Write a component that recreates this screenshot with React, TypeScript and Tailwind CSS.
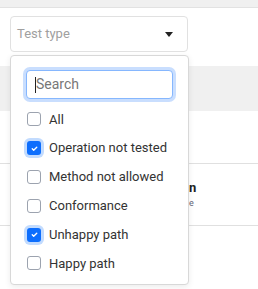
import React from 'react';

const options = [
  { label: 'All', checked: false },
  { label: 'Operation not tested', checked: true },
  { label: 'Method not allowed', checked: false },
  { label: 'Conformance', checked: false },
  { label: 'Unhappy path', checked: true },
  { label: 'Happy path', checked: false },
];

const Checkbox: React.FC<{ checked: boolean }> = ({ checked }) =>
  checked ? (
    <span className="flex h-[14px] w-[14px] shrink-0 items-center justify-center rounded-[3px] bg-[#0d6efd] shadow-[0_0_0_3px_#c2dbfe]">
      <svg width="9" height="9" viewBox="0 0 20 20" fill="none">
        <path d="M5 10.5l3.2 3.2L15 7" stroke="#fff" strokeWidth="3" strokeLinecap="round" strokeLinejoin="round" />
      </svg>
    </span>
  ) : (
    <span className="h-[14px] w-[14px] shrink-0 rounded-[3px] border border-[#9ca3af] bg-white" />
  );

export default function App() {
  return (
    <div className="relative h-[289px] w-[258px] overflow-hidden bg-white font-['Roboto',sans-serif]">
      {/* page behind the menu */}
      <div className="h-[8px] border-b border-[#e2e2e2] bg-[#f0f0f0]" />
      <div className="px-[10px] pt-[8px]">
        <div className="flex h-[36px] w-[178px] items-center justify-between rounded-[4px] border border-[#e1e1e1] bg-white pl-[6px] pr-[14px]">
          <span className="text-[13px] text-[#a0a0a0]">Test type</span>
          <svg width="8" height="5" viewBox="0 0 8 5">
            <path d="M0 0h8L4 5z" fill="#222" />
          </svg>
        </div>
      </div>
      <div className="mt-[14px] h-[45px] bg-[#f0f0f0]" />
      <div className="mt-[52px] border-t border-[#e0e0e0]" />
      <div className="pl-[189px] pt-[17px] text-[13px] font-bold leading-none text-[#222]">n</div>
      <div className="pl-[189px] pt-[5px] text-[9px] leading-none text-[#667]">e</div>
      <div className="mt-[17px] border-t border-[#e0e0e0]" />

      {/* dropdown menu */}
      <div className="absolute left-[10px] top-[55px] w-[179px] rounded-[4px] border border-[#d8d8d8] bg-white pb-[6px] pt-[14px] shadow-[0_2px_6px_rgba(0,0,0,0.08)]">
        <div className="px-[15px]">
          <div className="flex h-[29px] items-center rounded-[4px] border border-[#86b7fe] bg-white px-[8px] shadow-[0_0_0_3px_#c9defe]">
            <span className="h-[16px] w-px bg-[#222]" />
            <span className="text-[14px] text-[#777]">Search</span>
          </div>
        </div>
        <div className="mt-[6px] flex flex-col">
          {options.map((o) => (
            <div key={o.label} className="flex h-[28.8px] items-center gap-[8px] px-[16px]">
              <Checkbox checked={o.checked} />
              <span className="whitespace-nowrap text-[13px] text-[#333]">{o.label}</span>
            </div>
          ))}
        </div>
      </div>
    </div>
  );
}
